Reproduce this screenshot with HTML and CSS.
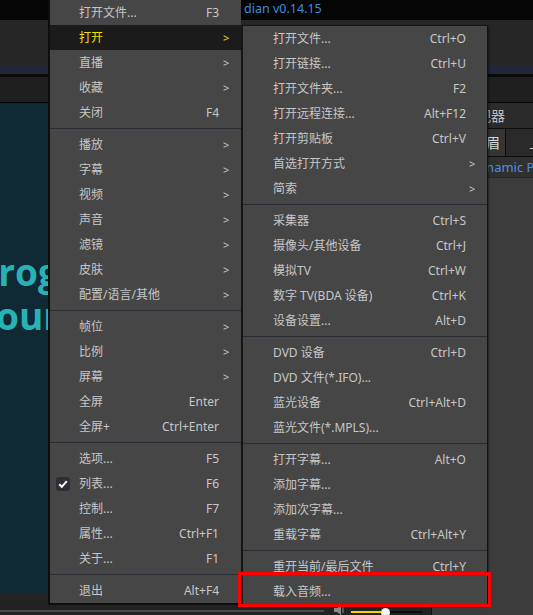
FILE: index.html
```html
<!DOCTYPE html>
<html lang="zh-CN">
<head>
<meta charset="utf-8">
<title>Player menu</title>
<link rel="stylesheet" href="styles.css">
</head>
<body>
<div class="app">
  <div class="titlebar"><span class="title">dian v0.14.15</span></div>
  <div class="toolbar"></div>
  <div class="band"></div>
  <div class="rule"></div>
  <div class="tabsbar"></div>
  <div class="main">
    <div class="video">
      <div class="screen">
        <div class="frame-text">
          <div class="big">Program</div>
          <div class="big">your</div>
        </div>
      </div>
      <div class="controls">
        <div class="seek"></div>
        <div class="volume">
          <svg class="spk" width="12" height="10" viewBox="0 0 12 10"><path d="M1 3h3l4-3v10L4 7H1z" fill="#8a8a8a"/><path d="M10 2v6" stroke="#8a8a8a" stroke-width="1"/></svg>
          <div class="vol-fill"></div>
          <div class="vol-knob"></div>
          <div class="vol-rest"></div>
        </div>
      </div>
    </div>
    <div class="side">
      <div class="side-head">监视器</div>
      <div class="side-tabs">
        <div class="tab tab-on">书眉</div>
        <div class="tab tab-off">上传</div>
      </div>
      <div class="side-info">Dynamic Programming</div>
      <div class="side-body"></div>
    </div>
  </div>

  <div class="menu menu-main">
    <div class="item"><span class="gut"></span><span class="lbl">打开文件...</span><span class="key">F3</span><span class="arr"></span></div>
    <div class="item active"><span class="gut"></span><span class="lbl">打开</span><span class="key"></span><span class="arr">&gt;</span></div>
    <div class="item"><span class="gut"></span><span class="lbl">直播</span><span class="key"></span><span class="arr">&gt;</span></div>
    <div class="item"><span class="gut"></span><span class="lbl">收藏</span><span class="key"></span><span class="arr">&gt;</span></div>
    <div class="item"><span class="gut"></span><span class="lbl">关闭</span><span class="key">F4</span><span class="arr"></span></div>
    <div class="sep"></div>
    <div class="item"><span class="gut"></span><span class="lbl">播放</span><span class="key"></span><span class="arr">&gt;</span></div>
    <div class="item"><span class="gut"></span><span class="lbl">字幕</span><span class="key"></span><span class="arr">&gt;</span></div>
    <div class="item"><span class="gut"></span><span class="lbl">视频</span><span class="key"></span><span class="arr">&gt;</span></div>
    <div class="item"><span class="gut"></span><span class="lbl">声音</span><span class="key"></span><span class="arr">&gt;</span></div>
    <div class="item"><span class="gut"></span><span class="lbl">滤镜</span><span class="key"></span><span class="arr">&gt;</span></div>
    <div class="item"><span class="gut"></span><span class="lbl">皮肤</span><span class="key"></span><span class="arr">&gt;</span></div>
    <div class="item"><span class="gut"></span><span class="lbl">配置/语言/其他</span><span class="key"></span><span class="arr">&gt;</span></div>
    <div class="sep"></div>
    <div class="item"><span class="gut"></span><span class="lbl">帧位</span><span class="key"></span><span class="arr">&gt;</span></div>
    <div class="item"><span class="gut"></span><span class="lbl">比例</span><span class="key"></span><span class="arr">&gt;</span></div>
    <div class="item"><span class="gut"></span><span class="lbl">屏幕</span><span class="key"></span><span class="arr">&gt;</span></div>
    <div class="item"><span class="gut"></span><span class="lbl">全屏</span><span class="key">Enter</span><span class="arr"></span></div>
    <div class="item"><span class="gut"></span><span class="lbl">全屏+</span><span class="key">Ctrl+Enter</span><span class="arr"></span></div>
    <div class="sep"></div>
    <div class="item"><span class="gut"></span><span class="lbl">选项...</span><span class="key">F5</span><span class="arr"></span></div>
    <div class="item"><span class="gut"><svg class="check" width="14" height="14" viewBox="0 0 14 14"><rect x="0" y="0" width="14" height="14" rx="3" fill="#2e2e3a"/><path d="M3.2 7.2 L5.8 9.8 L10.8 4.2" fill="none" stroke="#ffffff" stroke-width="2"/></svg></span><span class="lbl">列表...</span><span class="key">F6</span><span class="arr"></span></div>
    <div class="item"><span class="gut"></span><span class="lbl">控制...</span><span class="key">F7</span><span class="arr"></span></div>
    <div class="item"><span class="gut"></span><span class="lbl">属性...</span><span class="key">Ctrl+F1</span><span class="arr"></span></div>
    <div class="item"><span class="gut"></span><span class="lbl">关于...</span><span class="key">F1</span><span class="arr"></span></div>
    <div class="sep"></div>
    <div class="item"><span class="gut"></span><span class="lbl">退出</span><span class="key">Alt+F4</span><span class="arr"></span></div>
  </div>

  <div class="menu menu-sub">
    <div class="item"><span class="gut"></span><span class="lbl">打开文件...</span><span class="key">Ctrl+O</span><span class="arr"></span></div>
    <div class="item"><span class="gut"></span><span class="lbl">打开链接...</span><span class="key">Ctrl+U</span><span class="arr"></span></div>
    <div class="item"><span class="gut"></span><span class="lbl">打开文件夹...</span><span class="key">F2</span><span class="arr"></span></div>
    <div class="item"><span class="gut"></span><span class="lbl">打开远程连接...</span><span class="key">Alt+F12</span><span class="arr"></span></div>
    <div class="item"><span class="gut"></span><span class="lbl">打开剪贴板</span><span class="key">Ctrl+V</span><span class="arr"></span></div>
    <div class="item"><span class="gut"></span><span class="lbl">首选打开方式</span><span class="key"></span><span class="arr">&gt;</span></div>
    <div class="item"><span class="gut"></span><span class="lbl">简索</span><span class="key"></span><span class="arr">&gt;</span></div>
    <div class="sep"></div>
    <div class="item"><span class="gut"></span><span class="lbl">采集器</span><span class="key">Ctrl+S</span><span class="arr"></span></div>
    <div class="item"><span class="gut"></span><span class="lbl">摄像头/其他设备</span><span class="key">Ctrl+J</span><span class="arr"></span></div>
    <div class="item"><span class="gut"></span><span class="lbl">模拟TV</span><span class="key">Ctrl+W</span><span class="arr"></span></div>
    <div class="item"><span class="gut"></span><span class="lbl">数字 TV(BDA 设备)</span><span class="key">Ctrl+K</span><span class="arr"></span></div>
    <div class="item"><span class="gut"></span><span class="lbl">设备设置...</span><span class="key">Alt+D</span><span class="arr"></span></div>
    <div class="sep"></div>
    <div class="item"><span class="gut"></span><span class="lbl">DVD 设备</span><span class="key">Ctrl+D</span><span class="arr"></span></div>
    <div class="item"><span class="gut"></span><span class="lbl">DVD 文件(*.IFO)...</span><span class="key"></span><span class="arr"></span></div>
    <div class="item"><span class="gut"></span><span class="lbl">蓝光设备</span><span class="key">Ctrl+Alt+D</span><span class="arr"></span></div>
    <div class="item"><span class="gut"></span><span class="lbl">蓝光文件(*.MPLS)...</span><span class="key"></span><span class="arr"></span></div>
    <div class="sep"></div>
    <div class="item"><span class="gut"></span><span class="lbl">打开字幕...</span><span class="key">Alt+O</span><span class="arr"></span></div>
    <div class="item"><span class="gut"></span><span class="lbl">添加字幕...</span><span class="key"></span><span class="arr"></span></div>
    <div class="item"><span class="gut"></span><span class="lbl">添加次字幕...</span><span class="key"></span><span class="arr"></span></div>
    <div class="item"><span class="gut"></span><span class="lbl">重载字幕</span><span class="key">Ctrl+Alt+Y</span><span class="arr"></span></div>
    <div class="sep"></div>
    <div class="item"><span class="gut"></span><span class="lbl">重开当前/最后文件</span><span class="key">Ctrl+Y</span><span class="arr"></span></div>
    <div class="item"><span class="gut"></span><span class="lbl">载入音频...</span><span class="key"></span><span class="arr"></span></div>
  </div>

  <div class="highlight-box"></div>
</div>
</body>
</html>
```

FILE: styles.css
```css
html, body {
  margin: 0;
  padding: 0;
  background: #1f1f1f;
}

.app {
  position: relative;
  width: 533px;
  height: 615px;
  overflow: hidden;
  display: flex;
  flex-direction: column;
  font-family: "Noto Sans", "Noto Sans CJK SC", sans-serif;
}

.titlebar {
  height: 20px;
  flex: none;
  background: #050505;
  padding-left: 244px;
  box-sizing: border-box;
}

.title {
  display: block;
  font-size: 12.5px;
  line-height: 18px;
  color: #3f8ddb;
  white-space: nowrap;
}

.toolbar {
  height: 46px;
  flex: none;
  background: #262626;
}

.band {
  height: 8px;
  flex: none;
  background: #212638;
}

.rule {
  height: 3px;
  flex: none;
  background: #0a0a0a;
}

.tabsbar {
  height: 25px;
  flex: none;
  background: #1f1f1f;
  border-bottom: 1px solid #050505;
}

.main {
  flex: 1;
  display: flex;
  min-height: 0;
}

.video {
  width: 431px;
  flex: none;
  display: flex;
  flex-direction: column;
}

.screen {
  flex: 1;
  background: #0f2935;
  overflow: hidden;
}

.frame-text {
  margin-top: 147px;
  margin-left: -25px;
}

.big {
  font-family: "Open Sans", sans-serif;
  font-weight: 700;
  font-size: 37px;
  line-height: 44px;
  color: #29b2b6;
  white-space: nowrap;
}

.controls {
  height: 22px;
  flex: none;
  background: #222222;
  display: flex;
  align-items: flex-start;
  padding-top: 15px;
  box-sizing: border-box;
}

.seek {
  width: 324px;
  height: 2px;
  margin-top: 2px;
  background: #4a4a4a;
}

.volume {
  display: flex;
  align-items: center;
  margin-left: 9px;
  height: 8px;
}

.spk {
  display: block;
  margin-top: -4px;
}

.vol-fill {
  width: 30px;
  height: 2px;
  margin-left: 6px;
  background: #f2d800;
}

.vol-knob {
  width: 9px;
  height: 9px;
  border-radius: 50%;
  background: #f4f4f4;
}

.vol-rest {
  width: 32px;
  height: 2px;
  background: #0c0c0c;
}

.side {
  flex: 1;
  display: flex;
  flex-direction: column;
  background: #3c3c3c;
  border-left: 1px solid #111111;
  font-size: 14px;
}

.side-head {
  height: 25px;
  flex: none;
  background: #2b2b2b;
  border-bottom: 1px solid #0c0c0c;
  color: #bcbcbc;
  line-height: 25px;
  padding-left: 31px;
  white-space: nowrap;
  font-family: "Noto Sans CJK SC", sans-serif;
}

.side-tabs {
  height: 27px;
  flex: none;
  display: flex;
  background: #2b2b2b;
  border-bottom: 1px solid #0c0c0c;
}

.tab {
  line-height: 27px;
  color: #c8c8c8;
  white-space: nowrap;
  font-family: "Noto Sans CJK SC", sans-serif;
}

.tab-on {
  width: 73px;
  box-sizing: border-box;
  padding: 0 5px 0 40px;
  background: #353535;
  color: #d8d8d8;
}

.tab-off {
  flex: 1;
  padding-left: 23px;
  border-left: 1px solid #0c0c0c;
  background: #2a2a2a;
}

.side-info {
  height: 20px;
  flex: none;
  background: #303030;
  border-bottom: 1px solid #262626;
  color: #4b8fe0;
  font-size: 13px;
  line-height: 20px;
  padding-left: 38px;
  white-space: nowrap;
}

.side-body {
  flex: 1;
}

/* menus overlay */
.menu {
  position: absolute;
  background: #464646;
  color: #c6c6c6;
  font-family: "Noto Sans", "Noto Sans CJK SC", sans-serif;
  font-size: 12px;
  box-sizing: border-box;
}

.menu-main {
  left: 48px;
  top: -1px;
  width: 193px;
  border-left: 2px solid #0e0e0e;
  border-top: 1px solid #0e0e0e;
  border-bottom: 2px solid #0e0e0e;
}

.menu-sub {
  left: 241px;
  top: 25px;
  width: 247px;
  border-left: 2px solid #161616;
  border-top: 1px solid #161616;
  border-right: 1px solid #121212;
  border-bottom: 2px solid #121212;
  box-shadow: 1px 1px 2px rgba(0, 0, 0, 0.4);
}

.item {
  display: flex;
  align-items: center;
  height: 25px;
  line-height: 25px;
  padding-left: 6px;
  white-space: nowrap;
}

.menu-sub .item {
  padding-left: 7px;
}

.gut {
  width: 23px;
  flex: none;
  display: flex;
  align-items: center;
}

.check {
  display: block;
}

.lbl {
  flex: 1;
}

.key {
  text-align: right;
}

.arr {
  width: 22px;
  flex: none;
  box-sizing: border-box;
  padding-left: 4px;
  font-size: 11px;
}

.menu-sub .arr {
  width: 21px;
  padding-left: 3px;
}

.item.active {
  background: #1b1b1b;
  color: #f0e000;
}

.sep {
  height: 1px;
  margin: 3px 0;
  background: #2c2c37;
}

.highlight-box {
  position: absolute;
  left: 238px;
  top: 572px;
  width: 253px;
  height: 35px;
  border: 3px solid #ff0000;
  box-sizing: border-box;
}
```
